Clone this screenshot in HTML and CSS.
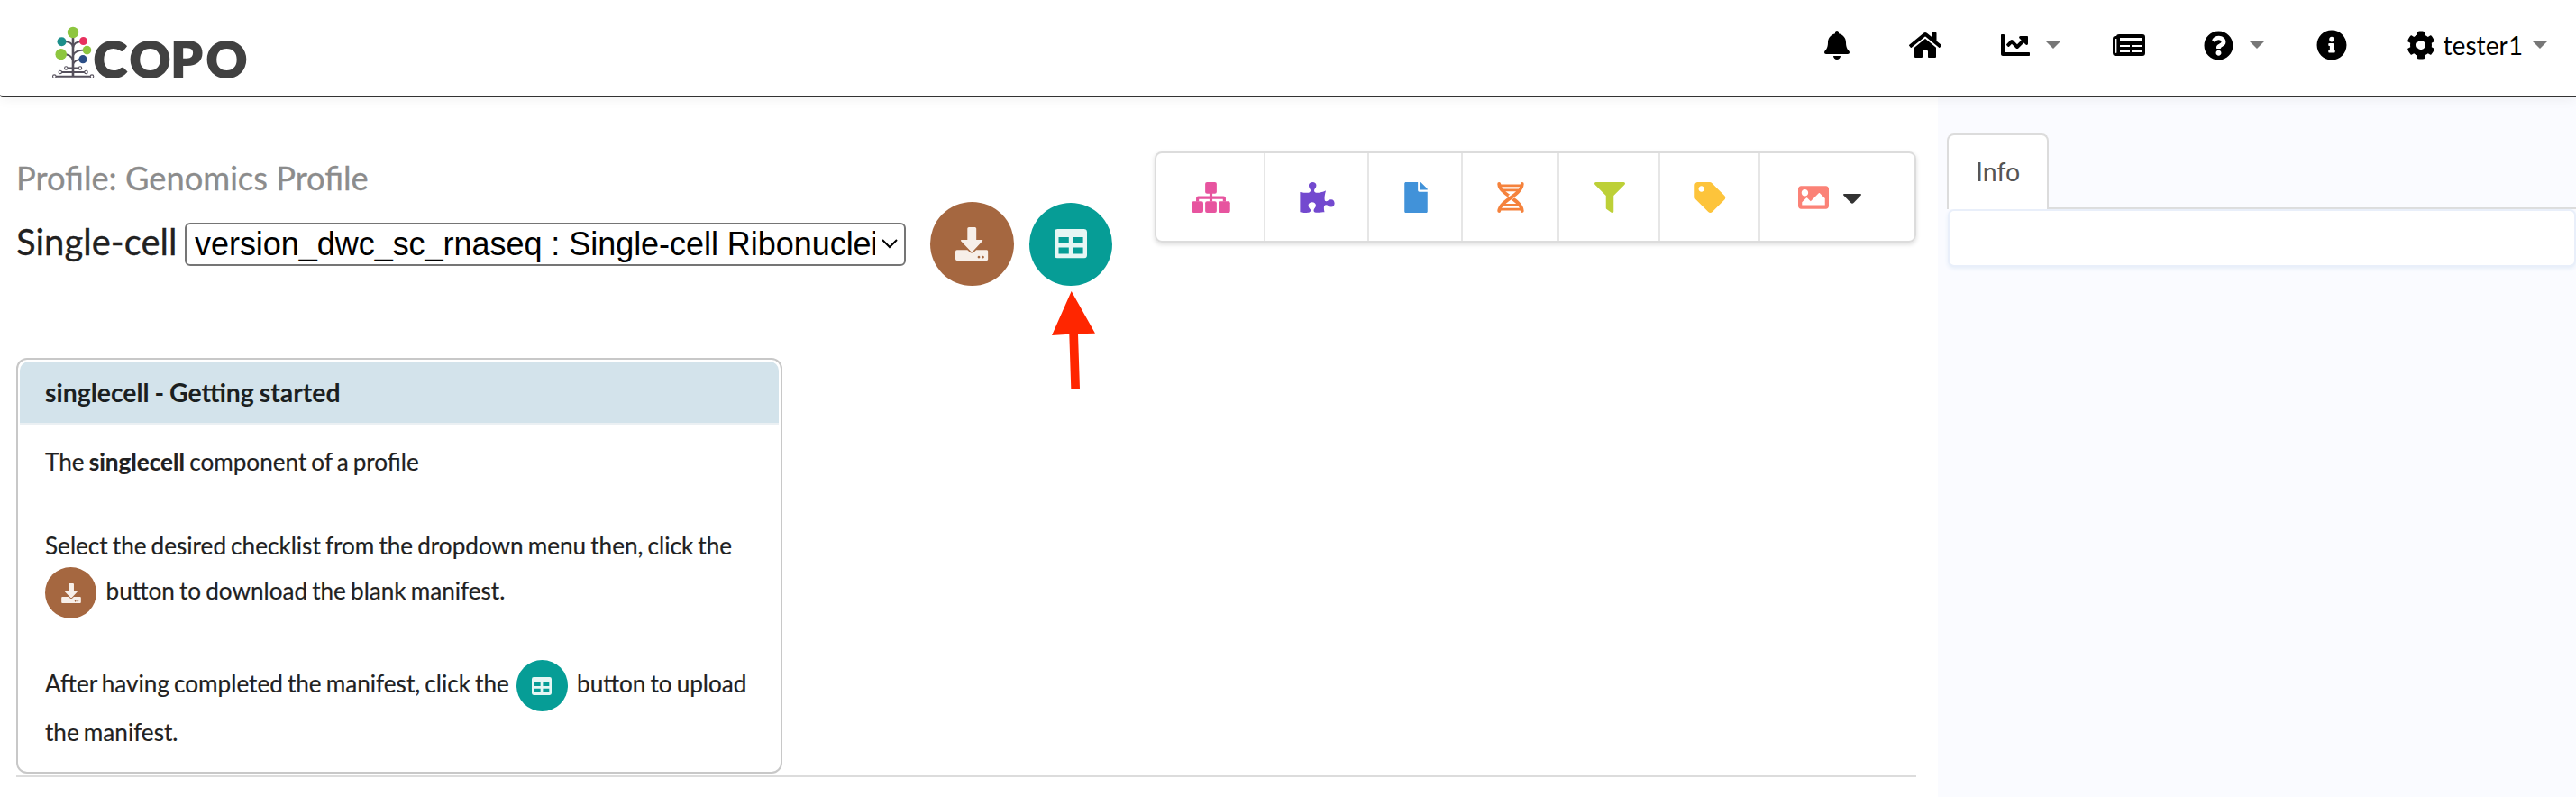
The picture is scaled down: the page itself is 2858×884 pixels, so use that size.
FILE: index.html
```html
<!DOCTYPE html>
<html lang="en">
<head>
<meta charset="utf-8">
<title>COPO</title>
<link rel="stylesheet" href="styles.css">
</head>
<body>
<svg class="defs" aria-hidden="true">
  <symbol id="download" viewBox="0 0 36.4 37">
    <path d="M15 0h6.6q1.6 0 1.6 1.6V14h5.9q1.9 0 .7 1.5L19.6 26.6q-1.4 1.4-2.8 0L6.3 15.5Q5.200 14 7 14h6.300V1.600Q13.300 0 15 0z"/>
    <path fill-rule="evenodd" d="M1.700 25.300h11.600l2.700 2.400q2.200 1.800 4.400 0l2.700-2.400h11.600q1.700 0 1.700 1.700v8.300q0 1.700-1.700 1.700h-33Q0 37 0 35.300V27q0-1.700 1.700-1.700zM26 31.700a1.400 1.400 0 1 0 .01 0zM30.500 31.700a1.400 1.400 0 1 0 .01 0z"/>
  </symbol>
  <symbol id="table" viewBox="0 0 36 32.400">
    <path fill-rule="evenodd" d="M3.400 0h29.200Q36 0 36 3.400V29q0 3.400-3.400 3.400H3.400Q0 32.400 0 29V3.400Q0 0 3.400 0zM4.500 9v7h11.300V9zM20.300 9v7h11.300V9zM4.500 20.600v6.800h11.300v-6.800zM20.300 20.600v6.800h11.300v-6.800z"/>
  </symbol>
</svg>

<header class="topbar">
  <a class="logo">
    <svg width="230" height="80" viewBox="55 20 230 80">
      <g fill="none" stroke="#55505c" stroke-width="2">
        <path d="M81 40v44" stroke-width="2.600"/>
        <path d="M70 46q10 0 11 6M91 46q-9 0-10 7M70 60q9 0 11 7M95 55.500q-12 0-14 6M91 66q-8 0-10 5M75 75.500h12M68 80h26M62 84.700h38" />
        <g fill="#fff" stroke-width="1.100"><circle cx="73.300" cy="75.500" r="1.700"/><circle cx="89" cy="75.500" r="1.700"/><circle cx="66.800" cy="80" r="1.700"/><circle cx="95.500" cy="80" r="1.700"/><circle cx="60.300" cy="84.700" r="1.800"/><circle cx="102" cy="84.700" r="1.800"/></g>
      </g>
      <circle cx="81" cy="36" r="6.200" fill="#8dc63f"/><circle cx="68.500" cy="46.300" r="5" fill="#1c8f8b"/><circle cx="92.500" cy="45.600" r="4.500" fill="#e8315f"/><circle cx="67.700" cy="60.200" r="6.200" fill="#8dc63f"/><circle cx="96.500" cy="55.600" r="4.800" fill="#8dc63f"/><circle cx="92" cy="65.700" r="4.600" fill="#2b4e86"/>
      <text class="logo-text" y="85.700" x="103.700 143.700 189.500 228.700">COPO</text>
    </svg>
  </a>
  <nav class="nav">
    <svg class="i-bell" viewBox="0 0 448 512"><path d="M224 512c35.320 0 63.970-28.650 63.970-64H160.030c0 35.350 28.650 64 63.970 64zm215.390-149.710c-19.320-20.760-55.470-51.990-55.470-154.290 0-77.700-54.480-139.900-127.940-155.160V32c0-17.670-14.320-32-31.980-32s-31.980 14.330-31.980 32v20.840C118.560 68.100 64.080 130.300 64.080 208c0 102.300-36.150 133.530-55.470 154.290-6 6.450-8.660 14.160-8.610 21.710.11 16.400 12.980 32 32.100 32h383.800c19.120 0 32-15.600 32.100-32 .05-7.550-2.610-15.270-8.610-21.710z"/></svg>
    <svg class="i-home" viewBox="0 0 576 512"><path d="M280.370 148.260L96 300.110V464a16 16 0 0 0 16 16l112.060-.29a16 16 0 0 0 15.920-16V368a16 16 0 0 1 16-16h64a16 16 0 0 1 16 16v95.640a16 16 0 0 0 16 16.050L464 480a16 16 0 0 0 16-16V300L295.670 148.260a12.190 12.190 0 0 0-15.300 0zM571.600 251.470L488 182.560V44.050a12 12 0 0 0-12-12h-56a12 12 0 0 0-12 12v72.610L318.470 43a48 48 0 0 0-61 0L4.340 251.470a12 12 0 0 0-1.600 16.900l25.500 31A12 12 0 0 0 45.150 301l235.220-193.740a12.190 12.190 0 0 1 15.300 0L530.900 301a12 12 0 0 0 16.900-1.600l25.500-31a12 12 0 0 0-1.700-16.930z"/></svg>
    <svg class="i-chart" viewBox="0 0 512 512"><path d="M496 384H64V80c0-8.840-7.160-16-16-16H16C7.160 64 0 71.160 0 80v336c0 17.670 14.330 32 32 32h464c8.840 0 16-7.160 16-16v-32c0-8.840-7.160-16-16-16zM464 96H345.940c-21.380 0-32.090 25.850-16.970 40.970l32.400 32.400L288 242.750l-73.370-73.370c-12.500-12.500-32.760-12.500-45.250 0l-68.690 68.690c-6.250 6.250-6.250 16.380 0 22.630l22.620 22.620c6.250 6.250 16.380 6.250 22.630 0L192 237.250l73.370 73.370c12.500 12.500 32.760 12.500 45.250 0l96-96 32.400 32.400c15.120 15.120 40.970 4.410 40.970-16.970V112c.01-8.840-7.150-16-16-16z"/></svg>
    <i class="caret caret-chart"></i>
    <svg class="i-news" viewBox="0 0 36 24"><path fill-rule="evenodd" d="M7 0h26q3 0 3 3v18q0 3-3 3H3.500Q0 24 0 20.500V5q0-3 3-3h1Q4.300 0 7 0zM8 4v4h24V4zM8 12v2h11v-2zM21 12v2h11v-2zM8 18v2h11v-2zM21 18v2h11v-2zM3 5v15.300q0 .7.700.7t.7-.7V5z"/></svg>
    <svg class="i-help" viewBox="0 0 512 512"><path d="M504 256c0 136.997-111.043 248-248 248S8 392.997 8 256C8 119.083 119.043 8 256 8s248 111.083 248 248zM262.655 90c-54.497 0-89.255 22.957-116.549 63.758-3.536 5.286-2.353 12.415 2.715 16.258l34.699 26.310c5.205 3.947 12.621 3.008 16.665-2.122 17.864-22.658 30.113-35.797 57.303-35.797 20.429 0 45.698 13.148 45.698 32.958 0 14.976-12.363 22.667-32.534 33.976C247.128 238.528 216 254.941 216 296v4c0 6.627 5.373 12 12 12h56c6.627 0 12-5.373 12-12v-1.333c0-28.462 83.186-29.647 83.186-106.667 0-58.002-60.165-102-116.531-102zM256 338c-25.365 0-46 20.635-46 46 0 25.364 20.635 46 46 46s46-20.636 46-46c0-25.365-20.635-46-46-46z"/></svg>
    <i class="caret caret-help"></i>
    <svg class="i-info" viewBox="0 0 512 512"><path d="M256 8C119.043 8 8 119.083 8 256c0 136.997 111.043 248 248 248s248-111.003 248-248C504 119.083 392.957 8 256 8zm0 110c23.196 0 42 18.804 42 42s-18.804 42-42 42-42-18.804-42-42 18.804-42 42-42zm56 254c0 6.627-5.373 12-12 12h-88c-6.627 0-12-5.373-12-12v-24c0-6.627 5.373-12 12-12h12v-64h-12c-6.627 0-12-5.373-12-12v-24c0-6.627 5.373-12 12-12h64c6.627 0 12 5.373 12 12v100h12c6.627 0 12 5.373 12 12v24z"/></svg>
    <svg class="i-cog" viewBox="0 0 512 512"><path d="M487.400 315.700l-42.600-24.600c4.300-23.200 4.300-47 0-70.200l42.600-24.600c4.900-2.800 7.100-8.600 5.500-14-11.100-35.600-30-67.800-54.700-94.600-3.800-4.100-10-5.100-14.800-2.300L380.800 110c-17.900-15.400-38.500-27.300-60.800-35.100V25.800c0-5.600-3.900-10.500-9.400-11.700-36.700-8.200-74.300-7.800-109.200 0-5.500 1.200-9.400 6.100-9.400 11.700V75c-22.200 7.900-42.800 19.800-60.800 35.100L88.700 85.500c-4.900-2.800-11-1.900-14.800 2.300-24.700 26.700-43.600 58.900-54.700 94.600-1.700 5.400.6 11.200 5.500 14L67.300 221c-4.300 23.200-4.300 47 0 70.200l-42.600 24.600c-4.900 2.800-7.100 8.600-5.500 14 11.100 35.600 30 67.800 54.700 94.600 3.800 4.100 10 5.100 14.800 2.300l42.600-24.600c17.900 15.400 38.500 27.300 60.800 35.100v49.200c0 5.600 3.900 10.500 9.400 11.700 36.700 8.200 74.300 7.800 109.200 0 5.500-1.200 9.400-6.100 9.400-11.700v-49.200c22.200-7.900 42.800-19.800 60.800-35.100l42.600 24.600c4.900 2.800 11 1.900 14.800-2.300 24.700-26.700 43.600-58.900 54.700-94.600 1.500-5.500-.7-11.300-5.600-14.100zM256 336c-44.100 0-80-35.900-80-80s35.900-80 80-80 80 35.900 80 80-35.900 80-80 80z"/></svg>
    <span class="user">tester1</span>
    <i class="caret caret-user"></i>
  </nav>
</header>

<div class="layout">
  <main class="main">
    <div class="heading">
      <div class="titles">
        <div class="profile">Profile: Genomics Profile</div>
        <div class="component">
          <span class="component-name">Single-cell</span>
          <div class="select"><span class="select-value">version_dwc_sc_rnaseq : Single-cell Ribonucleic</span><svg class="chevron" viewBox="0 0 18 11"><path d="M1 1l8 8 8-8"/></svg></div>
          <div class="circle brown"><svg class="g-download"><use href="#download"/></svg></div>
          <div class="circle teal"><svg class="g-table"><use href="#table"/></svg></div>
        </div>
      </div>
      <div class="toolbar">
        <a class="tool t1"><svg width="43" height="34" viewBox="0 0 640 512" fill="#e7549f"><rect x="224" width="192" height="192" rx="30"/><rect y="320" width="192" height="192" rx="30"/><rect x="224" y="320" width="192" height="192" rx="30"/><rect x="448" y="320" width="192" height="192" rx="30"/><path d="M296 180h48v55h184q40 0 40 40v50h-48v-42H344v42h-48v-42H120v42H72v-50q0-40 40-40h184z"/></svg></a>
        <a class="tool t2"><svg width="39" height="34" viewBox="0 0 576 512" fill="#7349cf"><path d="M519.442 288.651c-41.519 0-59.500 31.593-82.058 31.593C377.409 320.244 432 144 432 144s-196.288 80-196.288-3.297c0-35.827 36.288-46.250 36.288-85.985C272 19.216 243.885 0 210.539 0c-34.654 0-66.366 18.891-66.366 56.346 0 41.364 31.711 59.277 31.711 81.750C175.885 207.719 0 166.758 0 166.758v333.237s178.635 41.047 178.635-28.662c0-22.473-40-40.107-40-81.471 0-37.456 29.250-56.346 63.577-56.346 33.673 0 61.788 19.216 61.788 54.717 0 39.735-36.288 50.158-36.288 85.985 0 60.803 129.675 25.730 181.230 25.730 0 0-34.725-120.101 25.827-120.101 35.962 0 46.423 36.152 86.308 36.152C556.712 416 576 387.990 576 354.443c0-34.199-18.962-65.792-56.558-65.792z"/></svg></a>
        <a class="tool t3"><svg width="26" height="34" viewBox="0 0 384 512" fill="#4192d9"><path d="M224 136V0H24C10.700 0 0 10.700 0 24v464c0 13.300 10.700 24 24 24h336c13.300 0 24-10.700 24-24V160H248c-13.200 0-24-10.800-24-24zm160-14.100v6.100H256V0h6.100c6.400 0 12.500 2.500 17 7l97.900 98c4.500 4.500 7 10.600 7 16.900z"/></svg></a>
        <a class="tool t4"><svg width="30" height="34" viewBox="0 0 30 34" fill="none" stroke="#f5823c" stroke-linecap="round"><path stroke-width="3.800" d="M2.200 2C3 14 27 19 27.800 32"/><path stroke="#fff" stroke-width="6" stroke-linecap="butt" d="M20 12.500q-3 3-6 5"/><path stroke-width="3.800" d="M27.800 2C27 15 3 20 2.200 32"/><path stroke-width="2.800" stroke-linecap="butt" d="M3 3.800h24M6 8.800h17M7 25.400h16M4 30.200h22"/></svg></a>
        <a class="tool t5"><svg width="34" height="34" viewBox="0 0 512 512" fill="#bdd037"><path d="M487.976 0H24.028C2.710 0-8.047 25.866 7.058 40.971L192 225.941V432c0 7.831 3.821 15.170 10.237 19.662l80 55.980C298.020 518.690 320 507.493 320 487.980V225.941l184.947-184.970C520.021 25.896 509.338 0 487.976 0z"/></svg></a>
        <a class="tool t6"><svg width="34.500" height="34" viewBox="0 0 512 512" fill="#fdc43b"><path d="M0 252.118V48C0 21.490 21.490 0 48 0h204.118a48 48 0 0 1 33.941 14.059l211.882 211.882c18.745 18.745 18.745 49.137 0 67.882L293.823 497.941c-18.745 18.745-49.137 18.745-67.882 0L14.059 286.059A48 48 0 0 1 0 252.118zM112 64c-26.510 0-48 21.490-48 48s21.490 48 48 48 48-21.490 48-48-21.490-48-48-48z"/></svg></a>
        <a class="tool t7"><svg width="34" height="34" viewBox="0 0 512 512" fill="#fb8277"><path d="M464 448H48c-26.510 0-48-21.490-48-48V112c0-26.510 21.490-48 48-48h416c26.510 0 48 21.490 48 48v288c0 26.510-21.490 48-48 48zM112 120c-30.928 0-56 25.072-56 56s25.072 56 56 56 56-25.072 56-56-25.072-56-56-56zM64 384h384V272l-87.515-87.515c-4.686-4.686-12.284-4.686-16.971 0L208 320l-55.515-55.515c-4.686-4.686-12.284-4.686-16.971 0L64 336v48z"/></svg><svg class="drop" width="20" height="11" viewBox="0 0 20 11"><path d="M1.200 0h17.600q2 .2.700 1.800l-8 8.300q-1.500 1.500-3 0l-8-8.300Q-.8.2 1.200 0z"/></svg></a>
      </div>
    </div>

    <section class="card">
      <h2 class="card-title">singlecell - Getting started</h2>
      <div class="card-body">
        <p class="line l1">The <b>singlecell</b> component of a profile</p>
        <p class="line l2">Select the desired checklist from the dropdown menu then, click the</p>
        <p class="line l3"><span class="circle small brown"><svg class="g-download"><use href="#download"/></svg></span><span class="after-icon">button to download the blank manifest.</span></p>
        <p class="line l4"><span class="before-icon">After having completed the manifest, click the</span><span class="circle small teal"><svg class="g-table"><use href="#table"/></svg></span><span class="after-icon">button to upload</span></p>
        <p class="line l5">the manifest.</p>
      </div>
    </section>
    <div class="rule"></div>
    <svg class="pointer" width="48" height="109" viewBox="0 0 48 109"><path d="M21.700 0L48 46.700l-19 .5L31 108.300l-9.700.2L19.300 47.700 0 49z"/></svg>
  </main>
  <aside class="side">
    <div class="tabs"><a class="tab">Info</a></div>
    <div class="tab-panel"></div>
  </aside>
</div>
</body>
</html>
```
FILE: styles.css
```css
* { box-sizing: border-box; }
body { margin: 0; width: 2858px; height: 884px; overflow: hidden; background: #fff; color: #212121; font-family: Lato, sans-serif; display: flex; flex-direction: column; }
.defs { display: none; }
svg { flex: none; display: block; }
p, h2 { margin: 0; }

.topbar { flex: none; height: 108px; border-bottom: 2px solid #333; border-bottom-left-radius: 3px; box-shadow: 0 2px 14px rgba(0,0,0,.06); background: #fff; display: flex; justify-content: space-between; position: relative; z-index: 2; }
.logo { padding: 20px 0 0 55px; }
.logo-text { font: 900 56px Lato, sans-serif; fill: #414141; stroke: #414141; stroke-width: 2px; }
.nav { display: flex; align-items: center; height: 100px; padding-right: 32.500px; }
.i-bell { width: 28px; height: 32px; margin-right: 66px; }
.i-home { width: 36px; height: 32px; margin-right: 66px; }
.i-chart { width: 32px; height: 32px; }
.i-news { width: 36px; height: 24px; margin-right: 65.500px; }
.i-help { width: 33px; height: 33px; }
.i-info { width: 34px; height: 34px; margin-right: 66px; }
.i-cog { width: 32px; height: 32px; }
.user { width: 89px; margin-left: 9px; font-size: 28.200px; line-height: 32px; color: #000; white-space: nowrap; }
.caret { border: 8px solid transparent; border-top-color: #777; border-bottom: 0; }
.caret-chart { margin: 0 57.500px 0 18px; }
.caret-help { margin: 0 57.500px 0 18px; }
.caret-user { margin-left: 10px; }

.layout { flex: 1; display: flex; }
.main { width: 2150px; padding-left: 18px; position: relative; }
.heading { height: 289px; display: flex; justify-content: space-between; padding-right: 24px; }
.titles { padding-top: 65px; }
.profile { height: 51px; font-size: 36.300px; line-height: 48px; color: #8c8c8c; white-space: nowrap; -webkit-text-stroke: .3px #8c8c8c; }
.component { height: 93px; display: flex; align-items: center; }
.component-name { width: 187px; padding-bottom: 5px; font-size: 40px; line-height: 48px; white-space: nowrap; -webkit-text-stroke: .3px #212121; }
.select { width: 800px; height: 48px; border: 2px solid #757575; border-radius: 6px; padding: 0 7px 0 9px; display: flex; align-items: center; justify-content: space-between; margin-right: 27px; }
.select-value { width: 755px; overflow: hidden; white-space: nowrap; font: 36px/44px "Liberation Sans", sans-serif; letter-spacing: -.04px; color: #000; }
.chevron { width: 18px; height: 11px; fill: none; stroke: #000; stroke-width: 2; }
.circle { width: 93px; height: 93px; border-radius: 50%; display: flex; align-items: center; justify-content: center; flex: none; }
.brown { background: #a56740; fill: #f7efe9; }
.teal { background: #069d96; fill: #e6f6f4; }
.component .teal { margin-left: 17px; width: 92px; height: 92px; }
.g-download { width: 36.400px; height: 37px; }
.g-table { width: 36px; height: 32.400px; }
.small { width: 57px; height: 57px; }
.small .g-download { width: 22px; height: 22px; }
.small .g-table { width: 22px; height: 20px; }

.toolbar { margin-top: 60px; width: 845px; height: 101px; border: 2px solid #dcdcdc; border-radius: 8px; box-shadow: 0 2px 5px rgba(0,0,0,.14); display: flex; }
.tool { display: flex; align-items: center; border-right: 2px solid #e6e6e6; padding-top: 1px; }
.t1 { width: 121px; padding-left: 39px; }
.t2 { width: 115px; padding-left: 38px; }
.t3 { width: 104px; padding-left: 39px; }
.t4 { width: 107px; padding-left: 38px; }
.t5 { width: 112px; padding-left: 39px; }
.t6 { width: 111px; padding-left: 38px; }
.t7 { border: 0; padding-left: 42px; }
.drop { margin: 3px 0 0 16px; fill: #333; }

.card { width: 850px; height: 461px; border: 2px solid #c8c8c8; border-radius: 12px; padding: 2px; }
.card-title { height: 70px; padding-left: 28px; background: #d3e3eb; border-bottom: 2px solid #ebf0f3; border-radius: 10px 10px 0 0; font-size: 28.400px; line-height: 68px; font-weight: 700; word-spacing: -1px; color: #1b1f21; }
.card-body { padding-left: 28px; }
.line { font-size: 26.130px; word-spacing: -1.600px; display: flex; align-items: center; white-space: pre; -webkit-text-stroke: .2px #212121; }
.l1 { height: 40px; margin-top: 21px; }
.l2 { height: 40px; margin-top: 53px; }
.l3 { height: 57px; margin-top: 4px; }
.l4 { height: 57px; margin-top: 46px; }
.l5 { height: 40px; margin-top: 3px; }
.before-icon { width: 522.500px; }
.after-icon { margin-left: 10.500px; }
.l3 .after-icon, .l4 .before-icon, .l4 .after-icon { padding-bottom: 5px; }
.rule { width: 2108px; height: 2px; margin-top: 2px; background: #dcdcdc; }
.pointer { position: absolute; left: 1167px; top: 215px; fill: #ff2600; }

.side { width: 708px; background: #fafbff; padding: 40px 0 0 10px; }
.tabs { height: 84px; display: flex; border-bottom: 2px solid #dcdcdc; }
.tab { width: 113px; height: 84px; border: 2px solid #dcdcdc; border-bottom: 0; border-radius: 8px 8px 0 0; background: #fff; font-size: 28.500px; line-height: 80px; padding-left: 30px; color: #555; }
.tab-panel { width: 697px; height: 64px; margin-left: 1px; background: #fff; border: 2px solid #e9effa; border-radius: 7px; box-shadow: 0 2px 4px #e6eef8; }
```
